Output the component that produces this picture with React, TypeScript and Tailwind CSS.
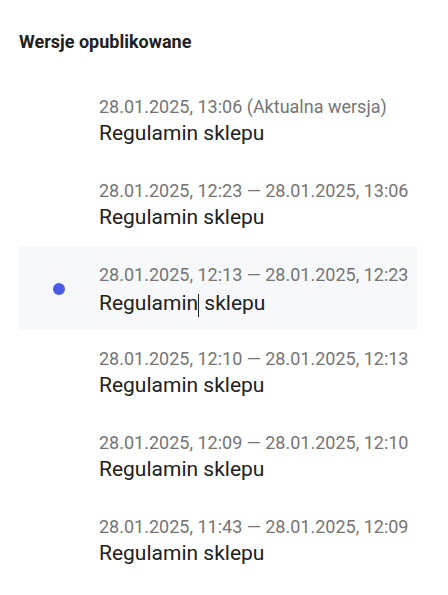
const versions = [
  { range: "28.01.2025, 13:06 (Aktualna wersja)", title: "Regulamin sklepu" },
  { range: "28.01.2025, 12:23 — 28.01.2025, 13:06", title: "Regulamin sklepu" },
  { range: "28.01.2025, 12:13 — 28.01.2025, 12:23", title: "Regulamin sklepu", active: true },
  { range: "28.01.2025, 12:10 — 28.01.2025, 12:13", title: "Regulamin sklepu" },
  { range: "28.01.2025, 12:09 — 28.01.2025, 12:10", title: "Regulamin sklepu" },
  { range: "28.01.2025, 11:43 — 28.01.2025, 12:09", title: "Regulamin sklepu" },
]

export default function App() {
  return (
    <div className="min-h-[595px] bg-white pl-[19px] pr-[31px] pt-[30px] font-['Roboto',sans-serif]">
      <h2 className="text-[18px] font-bold leading-[24px] text-[#212121]">Wersje opublikowane</h2>

      <ul className="mt-[24px] flex flex-col">
        {versions.map((v) => (
          <li
            key={v.range}
            className={`flex h-[84px] items-start ${v.active ? "bg-[#f7f8fa]" : ""}`}
          >
            <div className="flex w-[80px] justify-center pt-[37px]">
              {v.active && <span className="h-[12px] w-[12px] rounded-full bg-[#4a5ae6]" />}
            </div>
            <div className="flex flex-col pt-[17px]">
              <span className="text-[18px] leading-[24px] text-[#757575]">{v.range}</span>
              <span className="text-[21px] leading-[28px] text-[#212121]">
                {v.active ? (
                  <>
                    Regulamin<span className="inline-block h-[23px] w-px translate-y-[7px] bg-[#212121]" /> sklepu
                  </>
                ) : (
                  v.title
                )}
              </span>
            </div>
          </li>
        ))}
      </ul>
    </div>
  )
}
